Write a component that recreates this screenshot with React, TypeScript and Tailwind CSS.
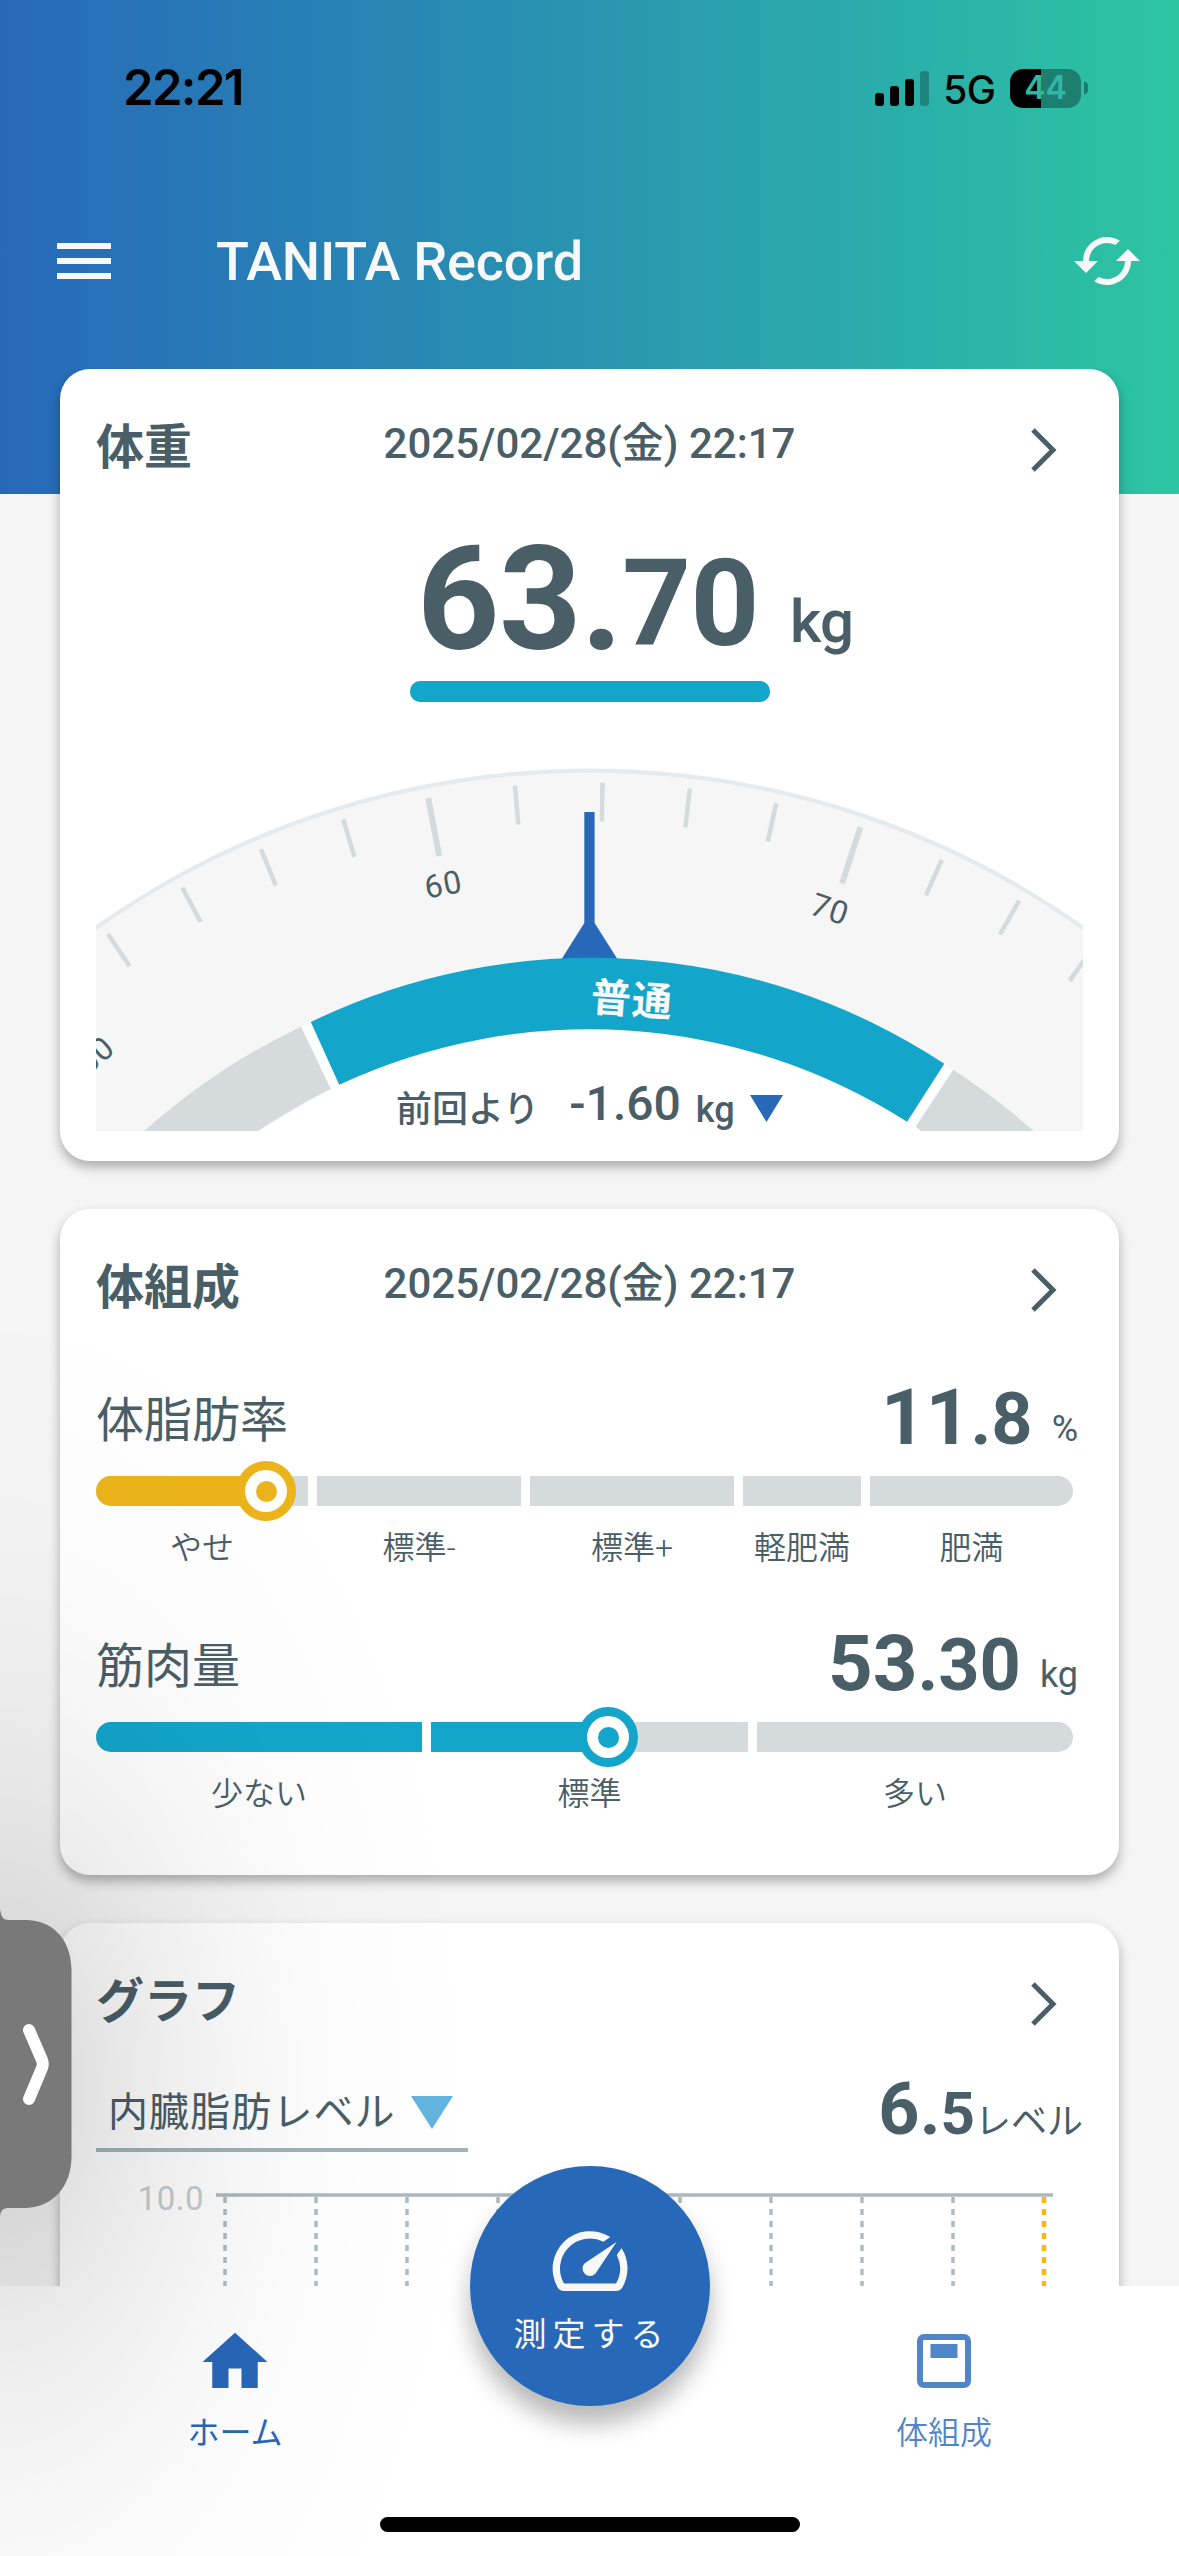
import { MdCached, MdHome, MdSpeed } from 'react-icons/md';

interface Segment {
  label: string;
  width: number;
  fill: number;
}

interface MeterProps {
  title: string;
  integer: string;
  decimal: string;
  unit: string;
  segments: Segment[];
  knob: number;
  tone: 'yellow' | 'cyan';
}

const fatSegments: Segment[] = [
  { label: 'やせ', width: 212, fill: 170 },
  { label: '標準-', width: 204, fill: 0 },
  { label: '標準+', width: 204, fill: 0 },
  { label: '軽肥満', width: 118, fill: 0 },
  { label: '肥満', width: 203, fill: 0 },
];

const muscleSegments: Segment[] = [
  { label: '少ない', width: 326, fill: 326 },
  { label: '標準', width: 317, fill: 177 },
  { label: '多い', width: 316, fill: 0 },
];

function StatusBar() {
  return (
    <div className="flex h-[175px] items-start justify-between pl-[123px] pr-[91px] pt-[58px] text-black">
      <span className="font-['Inter'] text-[49px] font-semibold leading-[60px] tracking-[-1.6px]">22:21</span>
      <div className="flex h-[60px] items-center">
        <svg width="54" height="35" viewBox="0 0 54 35" className="mr-[14px]">
          <rect x="0" y="22" width="9" height="13" rx="3" />
          <rect x="15" y="15" width="9" height="20" rx="3" />
          <rect x="30" y="8" width="9" height="27" rx="3" />
          <rect x="45" y="0" width="9" height="35" rx="3" opacity="0.25" />
        </svg>
        <span className="mr-[15px] mt-[3px] font-['Inter'] text-[39px] font-[450] leading-[60px] tracking-[-0.8px]">5G</span>
        <div className="flex h-[39px] w-[71px] items-center justify-center rounded-[13px] bg-[linear-gradient(to_right,#000_0_31px,rgba(0,0,0,0.33)_31px)] font-['Inter'] text-[32px] font-semibold text-[#2fb8a6]">
          44
        </div>
        <div className="ml-[3px] h-[12px] w-[4px] rounded-r-full bg-black/35" />
      </div>
    </div>
  );
}

function AppBar() {
  return (
    <div className="flex items-center pl-[57px] pr-[36px] text-[#f8f8f8]">
      <div className="flex w-[54px] flex-col gap-[9px]">
        <div className="h-[6px] bg-current" />
        <div className="h-[6px] bg-current" />
        <div className="h-[6px] bg-current" />
      </div>
      <h1 className="ml-[105px] grow pt-[2px] text-[54px] font-medium leading-[70px] tracking-[-0.2px]">TANITA Record</h1>
      <MdCached size={72} />
    </div>
  );
}

function CardHeader({ title, date }: { title: string; date?: string }) {
  return (
    <div className="grid h-[50px] grid-cols-[1fr_auto_1fr] items-start">
      <h2 className="mt-px text-[48px] font-bold leading-[50px]">{title}</h2>
      <p className="-mt-[3px] whitespace-nowrap text-[42px] font-medium leading-[50px]">{date}</p>
      <div className="flex justify-end pr-[26px] pt-[6px]">
        <svg width="26" height="44" viewBox="0 0 26 44" fill="none" stroke="currentColor" strokeWidth="5">
          <path d="M2 2 L22 22 L2 42" />
        </svg>
      </div>
    </div>
  );
}

// Dial geometry, in the dial's own 987x363 coordinates
const CX = 493.5;
const CY = 855;
const STEP = 5.965;
const rad = (deg: number) => (deg * Math.PI) / 180;

function Dial() {
  const ticks = Array.from({ length: 13 }, (_, i) => {
    const n = i - 6;
    const value = 64 + n * 2;
    const angle = 0.885 + n * STEP;
    const major = value % 10 === 0;
    const len = major ? 59 : 39;
    const x1 = CX + 841.5 * Math.sin(rad(angle));
    const y1 = CY + 1 - 841.5 * Math.cos(rad(angle));
    const tilt = rad(angle * 0.965);
    return { value, major, x1, y1, x2: x1 - len * Math.sin(tilt), y2: y1 + len * Math.cos(tilt) };
  });
  const labels = [50, 60, 70].map((value) => ({ value, angle: 0.885 + ((value - 64) / 2) * STEP }));

  return (
    <svg width="987" height="363" viewBox="0 0 987 363" className="block">
      <path d="M0 363 V157 A855 855 0 0 1 987 157 V363 Z" fill="#f6f6f6" />
      <path d="M0 160 A853 853 0 0 1 987 160" fill="none" stroke="#e6eaec" strokeWidth="4" />
      {ticks.map((t) => (
        <line key={t.value} x1={t.x1} y1={t.y1} x2={t.x2} y2={t.y2} stroke="#d5dadd" strokeWidth={t.major ? 6 : 4.5} />
      ))}
      {labels.map((l) => (
        <text
          key={l.value}
          transform={`rotate(${l.angle} ${CX} ${CY})`}
          x={CX - 2}
          y="113"
          textAnchor="middle"
          fontSize="32"
          letterSpacing="1"
          fill="#4a5e68"
        >
          {l.value}
        </text>
      ))}
      {/* white inner face under the bands */}
      <path d="M162 363 L234.8 321 L205 258.7 L214.8 254 A643 643 0 0 1 848.3 295.7 L857.2 301.7 L819.7 358.7 L825.4 363 Z" fill="#fff" />
      <path d="M205 258.7 A668 668 0 0 0 48.2 363 H162.1 A596 596 0 0 1 234.8 321 Z" fill="#d5dadd" />
      <path d="M857.2 301.7 A668 668 0 0 1 937.6 363 H825.4 L819.7 358.7 Z" fill="#d5dadd" />
      <path d="M488.3 44 H498.6 V155 L522 192 H465 L488.3 155 Z" fill="#2868b9" />
      <path d="M214.8 254 A643 643 0 0 1 848.3 295.7 L811.1 353.7 A592 592 0 0 0 243.2 316.7 Z" fill="#14a5cb" />
      <text x="536" y="246" transform="rotate(4 536 231)" textAnchor="middle" fontSize="40" fontWeight="700" letterSpacing="1" fill="#f8f8f8">
        普通
      </text>
    </svg>
  );
}

function WeightCard() {
  return (
    <section className="h-[792px] shrink-0 rounded-[30px] bg-white px-9 pt-[53px] shadow-[0_6px_12px_rgba(0,0,0,0.3)]">
      <CardHeader title="体重" date="2025/02/28(金) 22:17" />
      <div className="flex h-[209px] items-baseline pl-[321px] pt-[43px]">
        <span className="text-[144px] font-bold leading-[170px] tracking-[-0.6px]">63.</span>
        <span className="relative -top-1 text-[120px] font-bold leading-[120px] tracking-[-0.5px]">70</span>
        <span className="relative -top-[7px] ml-[31px] text-[60px] font-medium leading-[60px] tracking-[-0.6px]">kg</span>
      </div>
      <div className="mx-auto h-[21px] w-[360px] rounded-[10px] bg-[#14a5cb]" />
      <div className="relative mt-[66px]">
        <Dial />
        <div className="absolute -bottom-[6px] left-[300px] flex items-baseline">
          <span className="text-[36px] font-medium leading-[54px]">前回より</span>
          <span className="relative -top-[2px] ml-[30px] text-[48px] font-medium leading-[54px]">-1.60</span>
          <span className="ml-[15px] text-[36px] font-medium leading-[54px]">kg</span>
          <svg width="33" height="27" viewBox="0 0 33 27" className="ml-[15px]">
            <path d="M0 0 H33 L16.5 27 Z" fill="#2868b9" />
          </svg>
        </div>
      </div>
    </section>
  );
}

function Meter({ title, integer, decimal, unit, segments, knob, tone }: MeterProps) {
  const fillClass = tone === 'yellow' ? 'bg-[#ebb41a]' : 'bg-[#14a5cb]';
  return (
    <div className="h-[246px]">
      <div className="flex h-[106px] items-baseline justify-between">
        <h3 className="relative -top-[5px] text-[48px] leading-[72px]">{title}</h3>
        <p className="relative top-[2px] flex items-baseline pr-[5px]">
          <span className="text-[78px] font-bold leading-[92px]">{integer}</span>
          <span className="text-[72px] font-bold leading-[92px]">{decimal}</span>
          <span className="relative -top-[3px] ml-[19px] text-[36px]">{unit}</span>
        </p>
      </div>
      <div className="relative">
        <div className="flex gap-[9px]">
          {segments.map((s) => (
            <div key={s.label} className="group shrink-0" style={{ width: s.width }}>
              <div className="h-[30px] overflow-hidden bg-[#d5dadd] group-first:rounded-l-[15px] group-last:rounded-r-[15px]">
                <div className={`h-full ${fillClass}`} style={{ width: s.fill }} />
              </div>
              <p className="mt-[20px] whitespace-nowrap text-center text-[32px] font-[350] leading-[44px]">{s.label}</p>
            </div>
          ))}
        </div>
        <div
          className={`absolute -top-[15px] flex h-[60px] w-[60px] items-center justify-center rounded-full ${fillClass}`}
          style={{ left: knob - 30 }}
        >
          <div className="flex h-[42px] w-[42px] items-center justify-center rounded-full bg-white">
            <div className={`h-[21px] w-[21px] rounded-full ${fillClass}`} />
          </div>
        </div>
      </div>
    </div>
  );
}

function CompositionCard() {
  return (
    <section className="h-[666px] shrink-0 rounded-[30px] bg-white px-9 pt-[53px] shadow-[0_6px_12px_rgba(0,0,0,0.3)]">
      <CardHeader title="体組成" date="2025/02/28(金) 22:17" />
      <div className="pt-[58px]">
        <Meter title="体脂肪率" integer="11" decimal=".8" unit="%" segments={fatSegments} knob={170} tone="yellow" />
        <Meter title="筋肉量" integer="53" decimal=".30" unit="kg" segments={muscleSegments} knob={512} tone="cyan" />
      </div>
    </section>
  );
}

function GraphCard() {
  const columns = Array.from({ length: 9 }, (_, i) => 9 + i * 91);
  return (
    <section className="h-[500px] shrink-0 rounded-[30px] bg-white px-9 pt-[53px] shadow-[0_6px_12px_rgba(0,0,0,0.3)]">
      <CardHeader title="グラフ" />
      <div className="mt-[47px] flex h-[79px] items-start justify-between">
        <div className="flex h-[79px] w-[372px] items-center border-b-[4px] border-[#a3b2ba] pl-[12px]">
          <span className="mt-[5px] whitespace-nowrap text-[40px] leading-[60px] tracking-[1.1px]">内臓脂肪レベル</span>
          <svg width="42" height="33" viewBox="0 0 42 33" className="ml-[15px] mt-1 shrink-0">
            <path d="M0 0 H42 L21 33 Z" fill="#61b4de" />
          </svg>
        </div>
        <p className="-mt-[3px] flex items-baseline">
          <span className="text-[72px] font-bold leading-[79px]">6.</span>
          <span className="text-[60px] font-bold leading-[79px]">5</span>
          <span className="text-[36px]">レベル</span>
        </p>
      </div>
      <div className="mt-[41px] flex">
        <span className="-mt-[12px] w-[120px] pr-[12px] text-right text-[33px] leading-[36px] tracking-[0.5px] text-[#c5cbcf]">10.0</span>
        <svg width="838" height="160" viewBox="0 0 838 160">
          {columns.map((x) => (
            <line key={x} x1={x} x2={x} y1="4" y2="160" stroke="#b0bbc1" strokeWidth="3.5" strokeDasharray="6 6" />
          ))}
          <line x1="828" x2="828" y1="4" y2="160" stroke="#ffb60f" strokeWidth="4.5" strokeDasharray="6 6" />
          <line x1="0" x2="837" y1="2" y2="2" stroke="#abb8bf" strokeWidth="3.5" />
        </svg>
      </div>
    </section>
  );
}

function BottomNav() {
  return (
    <nav className="relative h-[270px] shrink-0 bg-white">
      <div className="grid h-full grid-cols-[470px_239px_470px]">
        <div className="flex flex-col items-center pt-[37px] text-[#2868b9]">
          <MdHome size={78} />
          <span className="mt-[10px] text-[32px] leading-[44px]">ホーム</span>
        </div>
        <div />
        <div className="flex flex-col items-center pt-[48px] text-[#5086c9]">
          <svg width="54" height="54" viewBox="0 0 54 54">
            <rect x="3" y="3" width="48" height="48" rx="4" fill="none" stroke="currentColor" strokeWidth="6" />
            <rect x="13.5" y="10" width="27" height="14" fill="currentColor" />
          </svg>
          <span className="mt-[23px] text-[32px] font-[350] leading-[44px]">体組成</span>
        </div>
      </div>
      <button className="absolute -top-[120px] left-[470px] flex h-[240px] w-[240px] flex-col items-center rounded-full bg-[#2868b9] pt-[50px] text-[#f8f8f8] shadow-[0_18px_24px_rgba(0,0,0,0.28)]">
        <MdSpeed size={90} />
        <span className="mt-[7px] pl-[3px] text-[33px] leading-[44px] tracking-[6px]">測定する</span>
      </button>
      <div className="absolute bottom-6 left-[380px] h-[15px] w-[420px] rounded-full bg-black" />
    </nav>
  );
}

function SideHandle() {
  return (
    <>
      <div className="pointer-events-none absolute left-0 top-[1300px] h-[1256px] w-[600px] bg-[radial-gradient(ellipse_480px_800px_at_0px_790px,rgba(0,0,0,0.15),rgba(0,0,0,0.12)_15%,rgba(0,0,0,0.065)_35%,rgba(0,0,0,0.035)_52%,rgba(0,0,0,0.012)_70%,transparent)]" />
      <svg className="absolute left-0 top-[1905px]" width="72" height="315" viewBox="0 0 72 315">
        <path
          d="M0 4 C1 12 3 15 9 15 H26 C52 15 71 34 71.5 64 V252 C71 283 52 302 26 303 H9 C3 303 1 305 0 311 Z"
          fill="#797979"
        />
        <path d="M29 125 L42 155 Q43.500 159 42 163 L29 194" fill="none" stroke="#fff" strokeWidth="12" strokeLinecap="round" strokeLinejoin="round" />
      </svg>
    </>
  );
}

export default function App() {
  return (
    <div className="relative flex h-[2556px] w-[1179px] flex-col overflow-hidden bg-[#f5f5f5] font-['Roboto','Noto_Sans_CJK_JP',sans-serif] text-[#4a5e68]">
      <header className="h-[494px] shrink-0 bg-linear-to-r from-[#2868b9] via-[#2a95b0] to-[#2dc5a2]">
        <StatusBar />
        <div className="pt-[50px]">
          <AppBar />
        </div>
      </header>
      <main className="-mt-[125px] flex min-h-0 flex-1 flex-col gap-12 overflow-hidden px-[60px]">
        <WeightCard />
        <CompositionCard />
        <GraphCard />
      </main>
      <BottomNav />
      <SideHandle />
    </div>
  );
}
